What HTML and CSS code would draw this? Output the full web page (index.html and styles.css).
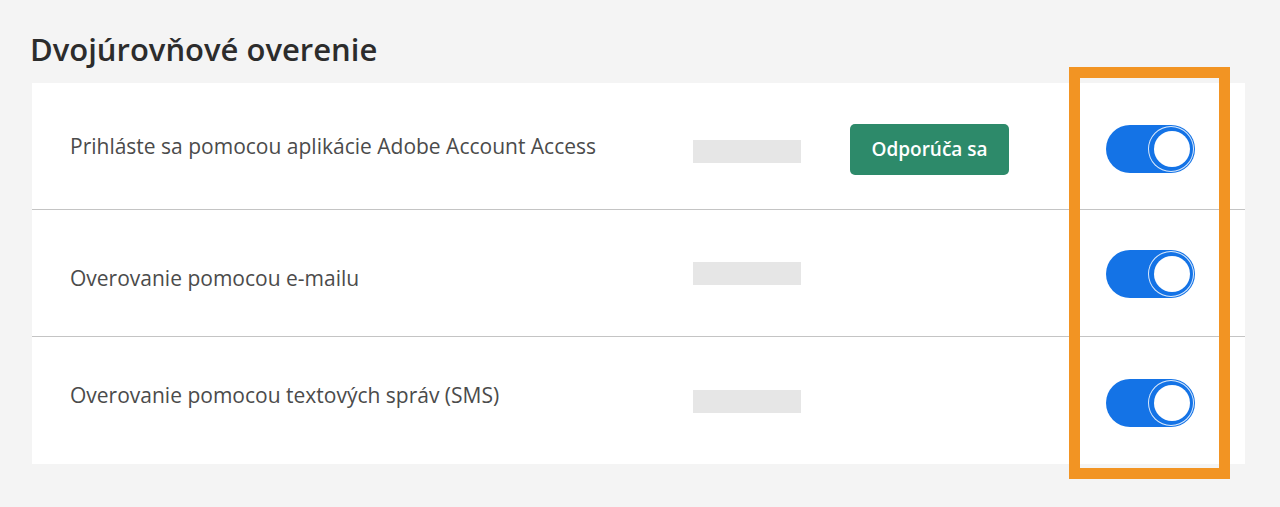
FILE: index.html
```html
<!DOCTYPE html>
<html lang="sk">
<head>
  <meta charset="UTF-8">
  <meta name="viewport" content="width=device-width, initial-scale=1.0">
  <title>Dvojúrovňové overenie</title>
  <link rel="stylesheet" href="styles.css">
</head>

<body>
  <div class="page">
    <h1>Dvojúrovňové overenie</h1>

    <!-- zoznam metód -->
    <div class="card">
      <div class="row">
        <div class="label">Prihláste sa pomocou aplikácie Adobe Account Access</div>
        <div class="placeholder"></div>
        <div class="badge-slot"><span class="badge">Odporúča sa</span></div>
        <div class="toggle"><span class="knob"></span></div>
      </div>
      <div class="row row-email">
        <div class="label">Overovanie pomocou e-mailu</div>
        <div class="placeholder"></div>
        <div class="badge-slot"></div>
        <div class="toggle"><span class="knob"></span></div>
      </div>
      <div class="row row-sms">
        <div class="label">Overovanie pomocou textových správ (SMS)</div>
        <div class="placeholder"></div>
        <div class="badge-slot"></div>
        <div class="toggle"><span class="knob"></span></div>
      </div>
    </div>

    <!-- zvýraznenie prepínačov -->
    <div class="highlight"></div>
  </div>
</body>
</html>
```

FILE: styles.css
```css
:root {
  --blue: #1473e6;
  --green: #2d8a6a;
  --orange: #f29423;
}

body {
  margin: 0;
  background: #f4f4f4;
  font-family: "Open Sans", "Noto Sans", sans-serif;
  -webkit-font-smoothing: antialiased;
}

.page {
  position: relative;
  width: 1280px;
  height: 507px;
  padding: 27px 35px 0 32px;
  box-sizing: border-box;
}

h1 {
  margin: 0 0 12px -2px;
  font-size: 31px;
  font-weight: 600;
  line-height: 44px;
  color: #2c2c2c;
}

.card {
  background: #fff;
}

.row {
  display: flex;
  align-items: center;
  height: 127px;
  padding-left: 38px;
  border-bottom: 1px solid #c4c4c4;
  box-sizing: border-box;
}

.row:last-child {
  border-bottom: none;
}

.label {
  width: 623px;
  font-size: 21px;
  color: #4b4b4b;
  margin-top: 0;
}

.row-email .label {
  margin-top: 10px;
}

.row-sms .label {
  margin-top: -12px;
}

.placeholder {
  width: 108px;
  height: 23px;
  background: #e6e6e6;
  margin-top: 10px;
}

.row-email .placeholder {
  margin-top: 0;
}

.row-sms .placeholder {
  margin-top: 2px;
}

.badge-slot {
  width: 305px;
  padding-left: 49px;
  box-sizing: border-box;
  margin-top: 6px;
}

.badge {
  display: inline-block;
  width: 159px;
  height: 51px;
  line-height: 51px;
  text-align: center;
  background: var(--green);
  color: #fff;
  font-size: 19px;
  font-weight: 600;
  border-radius: 5px;
}

.toggle {
  position: relative;
  width: 89px;
  height: 48px;
  border-radius: 24px;
  background: var(--blue);
  margin-top: 6px;
}

.row-email .toggle {
  margin-top: 2px;
}

.row-sms .toggle {
  margin-top: 4px;
}

.knob {
  position: absolute;
  right: 1px;
  top: 1px;
  width: 46px;
  height: 46px;
  border-radius: 50%;
  box-shadow: inset 0 0 0 1px rgba(255, 255, 255, 0.85);
}

.knob::after {
  content: "";
  position: absolute;
  left: 6px;
  top: 5px;
  width: 36px;
  height: 36px;
  border-radius: 50%;
  background: #fff;
}

.highlight {
  position: absolute;
  left: 1069px;
  top: 67px;
  width: 161px;
  height: 412px;
  border: 11px solid var(--orange);
  box-sizing: border-box;
}
```
